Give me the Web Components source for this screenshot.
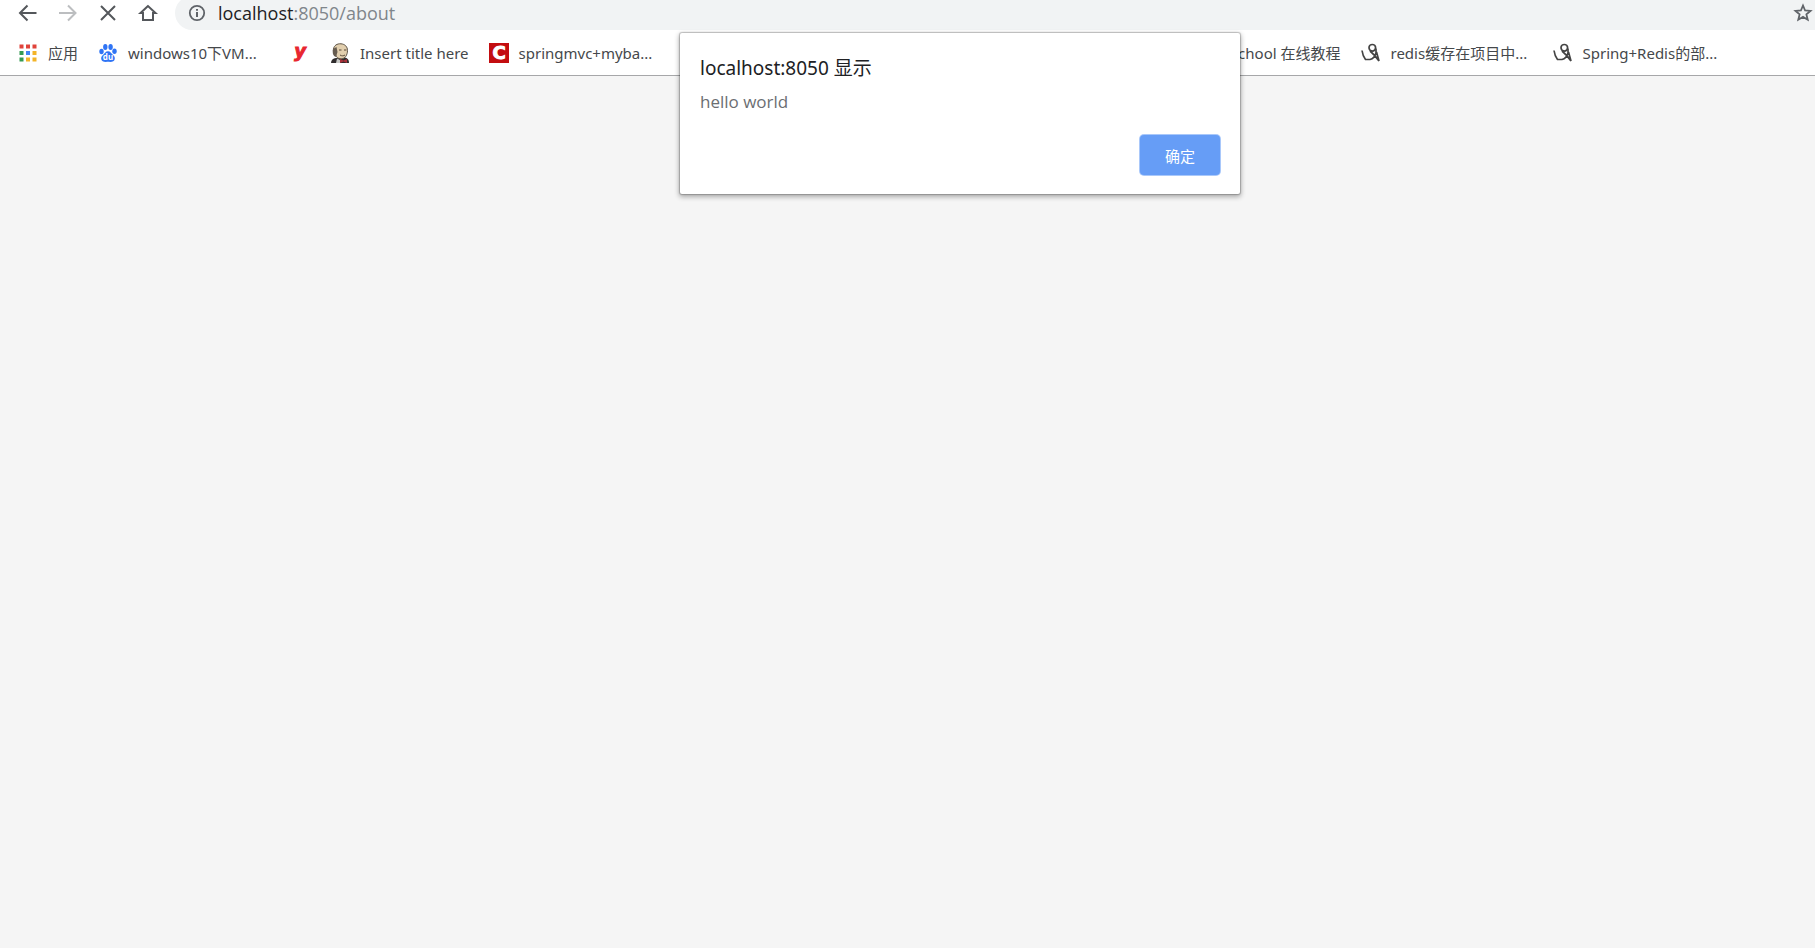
<!DOCTYPE html>
<html lang="zh-CN">
<head>
<meta charset="utf-8">
<title>localhost:8050/about</title>
<style>
    html, body {
        height: 100%;
        margin: 0;
    }
    body {
        overflow: hidden;
        font-family: "Noto Sans", "Noto Sans CJK SC", sans-serif;
        background-color: #f5f5f5;
    }
</style>
</head>
<body>
<browser-window>
    <browser-toolbar slot="toolbar" host="localhost" path=":8050/about"></browser-toolbar>
    <bookmark-bar slot="bookmarks">
        <bookmark-item icon="apps">应用</bookmark-item>
        <bookmark-item icon="paw" clipped>windows10下VM...</bookmark-item>
        <bookmark-item icon="letter-y"></bookmark-item>
        <bookmark-item icon="butler">Insert title here</bookmark-item>
        <bookmark-item icon="letter-c" clipped>springmvc+myba...</bookmark-item>
        <bookmark-item icon="none" class="after-gap">w3school 在线教程</bookmark-item>
        <bookmark-item icon="figure" clipped>redis缓存在项目中...</bookmark-item>
        <bookmark-item icon="figure" clipped>Spring+Redis的部...</bookmark-item>
    </bookmark-bar>
    <alert-dialog slot="dialog" heading="localhost:8050 显示" action="确定">hello world</alert-dialog>
</browser-window>

<script>
const ICONS = {
    'none': '',
    'back': '<path d="M18.500 10H2M9.500 2.500 2 10l7.500 7.500" fill="none" stroke="currentColor" stroke-width="2"/>',
    'forward': '<path d="M1 10h16.500M10 2.500l7.500 7.500-7.500 7.500" fill="none" stroke="currentColor" stroke-width="2"/>',
    'stop': '<path d="M3 3l14 14M17 3 3 17" fill="none" stroke="currentColor" stroke-width="2"/>',
    'home': '<path d="M10 3 2.500 10H5v7h10v-7h2.500z" fill="none" stroke="currentColor" stroke-width="2"/>',
    'info': '<circle cx="10" cy="10" r="7.200" fill="none" stroke="currentColor" stroke-width="1.800"/><path d="M10 9v5M10 6v1.800" stroke="currentColor" stroke-width="2"/>',
    'star': '<path d="M10 2.500l2.100 5 5.400.4-4.100 3.500 1.300 5.300L10 13.900l-4.700 2.800 1.300-5.300-4.100-3.500 5.400-.4z" fill="none" stroke="currentColor" stroke-width="1.800"/>',
    'apps': `
        <g fill="#e0433a"><path d="M1.500 1.500h4v4h-4zM8 1.500h4v4H8zM14.500 1.500h4v4h-4z"/></g>
        <g fill="#349a53"><path d="M1.500 8h4v4h-4zM1.500 14.500h4v4h-4z"/></g>
        <path fill="#4285f4" d="M8 8h4v4H8z"/>
        <path fill="#f3b428" d="M14.500 8h4v4h-4zM8 14.500h4v4H8zM14.500 14.500h4v4h-4z"/>`,
    'paw': `
        <g fill="#2f74f5">
            <ellipse cx="3.500" cy="8.500" rx="2.200" ry="2.700"/>
            <ellipse cx="7.300" cy="4" rx="2.200" ry="2.900"/>
            <ellipse cx="12.600" cy="4" rx="2.200" ry="2.900"/>
            <ellipse cx="16.500" cy="8.300" rx="2.200" ry="2.700"/>
            <path d="M10 8.200c2.500 0 3 2 4.800 3.500 1.600 1.300 2.300 2.500 1.900 4.500-.5 2.500-2.500 2.900-6.700 2.600-4.200.3-6.200-.1-6.700-2.600-.4-2 .3-3.200 1.900-4.500C7 10.200 7.500 8.200 10 8.200z"/>
        </g>
        <text x="10" y="17.200" font-size="8" font-weight="700" text-anchor="middle" fill="#fff">du</text>`,
    'letter-y': '<text x="10" y="13.500" font-family="DejaVu Sans" font-size="18" font-weight="700" font-style="italic" text-anchor="middle" fill="#e8262f" stroke="#e8262f">y</text>',
    'letter-c': '<path fill="#c30d10" d="M0 0h20v20H0z"/><text x="10" y="16" font-family="DejaVu Sans" font-size="18" font-weight="700" text-anchor="middle" fill="#fff" stroke="#fff">C</text>',
    'butler': `
        <path fill="#2f2c2c" d="M1 20c0-3 2-4.500 5-5l9-.5c3 .8 4 2.500 4 5.500z"/>
        <path fill="#e2cfae" stroke="#5d5346" d="M3.500 6C4 2.500 7 .5 11 .8c4 .3 6.500 3 6.500 6.700 0 4.500-2.500 8.300-6 8.300-4 0-5.500-2-6-4.500-1.500-1-2.500-3-2-5.300z"/>
        <path fill="#665c50" d="M3 6c-.8 4 0 7 3 8l1.500-5-1-5z"/>
        <path fill="none" stroke="#574737" d="M9 7h2.500M14 7h2.500M10 12c2 1.200 3.500 1 5 0"/>
        <path fill="#c9c9c6" d="M7 15.500l3 1.500 0 3H6z"/>
        <path fill="#a9303a" d="M10 16l3.500 1.500L17 16v4l-3.500-1.500L10 20z"/>`,
    'figure': '<path d="M1 7.500c.5 3.500 1.500 6.500 3.500 9h4.500c3-.8 5-3 6-6.500V5.500M9 8c3 2.500 6 5.500 9 10l-2.500-9" fill="none" stroke="#444" stroke-width="1.700"/><circle cx="11.300" cy="4.800" r="3.300" fill="none" stroke="#444" stroke-width="1.700"/>',
};

window.customElements.define('ui-icon', class extends HTMLElement {
    constructor() {
        super();
        this.attachShadow({ mode: 'open' });
    }

    connectedCallback() {
        this.shadowRoot.innerHTML = `
            <style>
                :host {
                    display: block;
                    flex: none;
                    width: 20px;
                    height: 20px;
                }
                svg {
                    display: block;
                    overflow: visible;
                }
            </style>
            <svg width="20" height="20" viewBox="0 0 20 20" aria-hidden="true">${ICONS[this.getAttribute('name')]}</svg>
        `;
    }
});

window.customElements.define('browser-window', class extends HTMLElement {
    constructor() {
        super();
        this.attachShadow({ mode: 'open' });
        this.shadowRoot.innerHTML = `
            <style>
                :host {
                    display: flex;
                    flex-direction: column;
                    position: relative;
                    height: 100%;
                }
                main {
                    flex: 1;
                    background-color: #f5f5f5;
                }
                ::slotted([slot="dialog"]) {
                    position: absolute;
                    top: 33px;
                    left: 680px;
                }
            </style>
            <slot name="toolbar"></slot>
            <slot name="bookmarks"></slot>
            <main></main>
            <slot name="dialog"></slot>
        `;
    }
});

window.customElements.define('browser-toolbar', class extends HTMLElement {
    constructor() {
        super();
        this.attachShadow({ mode: 'open' });
    }

    connectedCallback() {
        this.shadowRoot.innerHTML = `
            <style>
                :host {
                    display: flex;
                    align-items: flex-end;
                    height: 30px;
                    overflow: hidden;
                    padding-left: 8px;
                    background-color: #fff;
                    color: #5f6368;
                }
                button {
                    display: flex;
                    align-items: center;
                    justify-content: center;
                    flex: none;
                    width: 40px;
                    height: 34px;
                    padding: 0;
                    border: 0;
                    background: none;
                    color: #54575b;
                }
                button:disabled {
                    color: #bcbec0;
                }
                .address {
                    display: flex;
                    align-items: center;
                    flex: 1;
                    height: 34px;
                    margin-left: 7px;
                    padding-left: 12px;
                    gap: 11px;
                    border-radius: 17px 0 0 17px;
                    background-color: #f1f3f4;
                    font-family: "Open Sans", sans-serif;
                    font-size: 18px;
                    line-height: 24px;
                }
                .url {
                    flex: 1;
                    color: #80868b;
                }
                .host {
                    color: #202124;
                }
                .address button {
                    width: 24px;
                    color: #5f6368;
                }
            </style>
            <button aria-label="后退"><ui-icon name="back"></ui-icon></button>
            <button aria-label="前进" disabled><ui-icon name="forward"></ui-icon></button>
            <button aria-label="停止"><ui-icon name="stop"></ui-icon></button>
            <button aria-label="主页"><ui-icon name="home"></ui-icon></button>
            <div class="address">
                <ui-icon name="info"></ui-icon>
                <div class="url"><span class="host">${this.getAttribute('host')}</span>${this.getAttribute('path')}</div>
                <button aria-label="收藏"><ui-icon name="star"></ui-icon></button>
            </div>
        `;
    }
});

window.customElements.define('bookmark-bar', class extends HTMLElement {
    constructor() {
        super();
        this.attachShadow({ mode: 'open' });
        this.shadowRoot.innerHTML = `
            <style>
                :host {
                    display: flex;
                    align-items: center;
                    gap: 20px;
                    height: 45px;
                    padding-left: 18px;
                    border-bottom: 1px solid #a6a7a9;
                    background-color: #fff;
                    overflow: hidden;
                }
                ::slotted(.after-gap) {
                    margin-left: 500px;
                }
            </style>
            <slot></slot>
        `;
    }
});

window.customElements.define('bookmark-item', class extends HTMLElement {
    constructor() {
        super();
        this.attachShadow({ mode: 'open' });
    }

    connectedCallback() {
        this.shadowRoot.innerHTML = `
            <style>
                :host {
                    display: block;
                    flex: none;
                }
                a {
                    display: flex;
                    align-items: center;
                    gap: 10px;
                    color: #45484b;
                    font-size: 15px;
                    line-height: 20px;
                    text-decoration: none;
                    white-space: nowrap;
                }
                :host([clipped]) span {
                    width: 142px;
                }
                :host(:empty) span {
                    display: none;
                }
            </style>
            <a href="#"><ui-icon name="${this.getAttribute('icon')}"></ui-icon><span><slot></slot></span></a>
        `;
    }
});

window.customElements.define('alert-dialog', class extends HTMLElement {
    constructor() {
        super();
        this.attachShadow({ mode: 'open' });
    }

    connectedCallback() {
        this.shadowRoot.innerHTML = `
            <style>
                :host {
                    display: flex;
                    flex-direction: column;
                    box-sizing: border-box;
                    width: 560px;
                    padding: 20px 20px 19px;
                    border-radius: 2px;
                    background-color: #fff;
                    box-shadow: 0 0 1px 1px rgba(0, 0, 0, .2), 0 2px 5px 1px rgba(0, 0, 0, .3);
                }
                h1 {
                    margin: 0;
                    color: #202124;
                    font-size: 19px;
                    font-weight: 400;
                    line-height: 30px;
                }
                p {
                    margin: 6px 0 20px;
                    color: #6b6e72;
                    font-family: "Open Sans", sans-serif;
                    font-size: 17px;
                    line-height: 26px;
                }
                button {
                    align-self: flex-end;
                    width: 80px;
                    height: 40px;
                    padding: 0;
                    border: 0;
                    border-radius: 4px;
                    background-color: #669df6;
                    box-shadow: 0 0 0 1px #a9c8fa;
                    color: #fff;
                    font: inherit;
                    font-size: 15px;
                }
            </style>
            <h1>${this.getAttribute('heading')}</h1>
            <p><slot></slot></p>
            <button>${this.getAttribute('action')}</button>
        `;
    }
});
</script>
</body>
</html>
